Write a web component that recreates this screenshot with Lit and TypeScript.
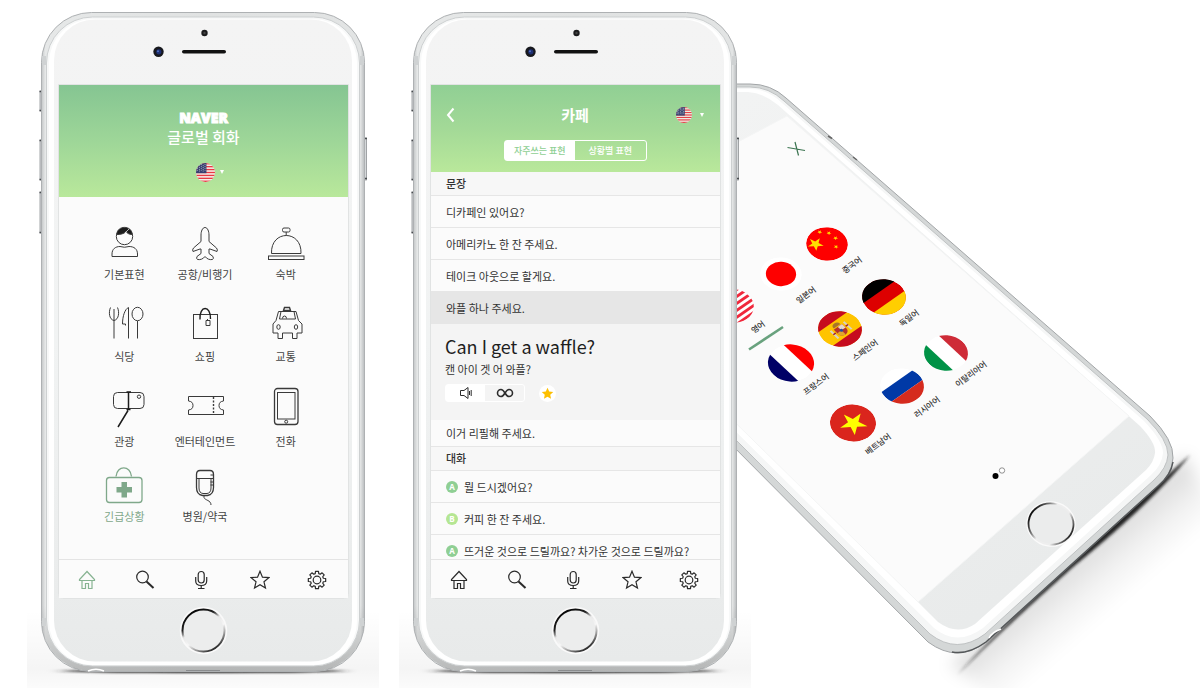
import { LitElement, html, svg, css } from "lit";
import { customElement, property } from "lit/decorators.js";
import { classMap } from "lit/directives/class-map.js";
import { styleMap } from "lit/directives/style-map.js";

const FONT = css`"Noto Sans CJK KR", "Noto Sans", sans-serif`;

const reset = css`
  :host, * { box-sizing: border-box; }
  button { border: 0; margin: 0; padding: 0; background: none; color: inherit; font: inherit; cursor: pointer; }
  h1, h2, p, ul { margin: 0; padding: 0; font: inherit; list-style: none; }
  svg { display: block; }
`;

const star = (cx: number, cy: number, r: number, inner = 0.4) =>
  Array.from({ length: 10 }, (_, i) => {
    const k = i % 2 ? r * inner : r;
    const a = (Math.PI / 5) * i - Math.PI / 2;
    return `${(cx + k * Math.cos(a)).toFixed(2)},${(cy + k * Math.sin(a)).toFixed(2)}`;
  }).join(" ");

const gear = (() => {
  const pts: string[] = [];
  for (let i = 0; i < 8; i++) {
    const base = (Math.PI / 4) * i;
    for (const [d, r] of [[-0.27, 6.6], [-0.17, 8.8], [0.17, 8.8], [0.27, 6.6]]) {
      pts.push(`${(10 + r * Math.cos(base + d)).toFixed(2)},${(10 + r * Math.sin(base + d)).toFixed(2)}`);
    }
  }
  return pts.join(" ");
})();

/* ---------- flags, drawn in a circle of radius 20 round the origin ---------- */

const stripes = Array.from({ length: 7 }, (_, i) =>
  svg`<rect x="-20" y=${-20 + (i * 80) / 13} width="40" height=${40 / 13} fill="#f0283c"/>`);

const cantonStars = [-17, -13, -9, -5, -1].flatMap((x, i) =>
  [-17, -13, -9, -5].map((y) => svg`<circle cx=${x} cy=${y + (i % 2) * 2} r="1" fill="#fff"/>`));

const flags: Record<string, unknown> = {
  us: svg`<rect x="-20" y="-20" width="40" height="40" fill="#fff"/>${stripes}
    <rect x="-20" y="-20" width="22" height="21.5" fill="#2c2f6e"/>${cantonStars}`,
  jp: svg`<circle r="20" fill="#fff"/><circle r="14.5" fill="#fe0000"/>`,
  cn: svg`<circle r="20" fill="#fe0000"/>
    <polygon points=${star(-8.5, -7, 8)} fill="#ffe000"/>
    <polygon points=${star(4, -15, 2.5)} fill="#ffe000"/><polygon points=${star(10, -8.5, 2.5)} fill="#ffe000"/>
    <polygon points=${star(11, 0, 2.5)} fill="#ffe000"/><polygon points=${star(4.5, 8, 2.5)} fill="#ffe000"/>`,
  fr: svg`<circle r="20" fill="#fff"/><rect x="-20" y="-20" width="12" height="40" fill="#000066"/>
    <rect x="8" y="-20" width="12" height="40" fill="#fe0000"/>`,
  es: svg`<circle r="20" fill="#ffc400"/><rect x="-20" y="-20" width="40" height="10" fill="#c60b1e"/>
    <rect x="-20" y="10" width="40" height="10" fill="#c60b1e"/>
    <path d="M-5-3h10v6q0 4-5 5q-5-1-5-5z" fill="#b5322c"/><path d="M0-3h5v5h-5z" fill="#e6d6c8"/>
    <path d="M-5 2h5v6q-5-1-5-5z" fill="#e0a52e"/><circle cx="0" cy="2" r="1.6" fill="#2b4c9b"/>
    <path d="M-4-4q0-4 4-4t4 4z" fill="#a8742a"/>
    <path d="M-8-4v11M8-4v11" stroke="#d8d2c4" stroke-width="2"/><path d="M-9 1h3M6 1h3" stroke="#a5202a" stroke-width="1.5"/>`,
  de: svg`<circle r="20" fill="#dd0000"/><rect x="-20" y="-20" width="40" height="13" fill="#000"/>
    <rect x="-20" y="7" width="40" height="13" fill="#ffce00"/>`,
  vn: svg`<circle r="20" fill="#da251d"/><polygon points=${star(0, 0.5, 12.5, 0.38)} fill="#ffff00"/>`,
  ru: svg`<circle r="20" fill="#fff"/><rect x="-20" y="-7" width="40" height="14" fill="#0039a6"/>
    <rect x="-20" y="7" width="40" height="13" fill="#d52b1e"/>`,
  it: svg`<circle r="20" fill="#fff"/><rect x="-20" y="-20" width="12" height="40" fill="#009246"/>
    <rect x="8" y="-20" width="12" height="40" fill="#ce2b37"/>`,
};

/* ---------- category icons, 44 x 44 ---------- */

const icons: Record<string, unknown> = {
  person: svg`<circle cx="22.5" cy="16.5" r="8.2"/>
    <path d="M14.8 14.5C15 5 30 5 30.2 14.5C27 14.5 25 13 24 11.5C22 14 18 14.5 14.8 14.5z" fill="#1c1c1c"/>
    <path d="M23 13l4-4" stroke="#fff" stroke-width=".7"/>
    <path d="M10 36.5v-2.500C10 29 13.500 26.500 18 26.500q4.500 1.500 9 0C32 26.500 35.500 29 35.500 34v2.500z"/>`,
  plane: svg`<path d="M22 7.500c-2.600 0-4 4-4 7.500v6.500l-7.500 6.500q-1.500 2-.5 3.500l7-2.500h1v4.500l-4 3q-1 2 .5 3c3 .5 5.500-.5 7.500-3c2 2.500 4.500 3.500 7.500 3q1.500-1 .5-3l-4-3V29h1l7 2.500q1-1.500-.5-3.500L26 21.500V15c0-3.500-1.400-7.500-4-7.500z"/>`,
  bell: svg`<rect x="18.500" y="8" width="7.500" height="4" rx="1.500"/><path d="M22.200 12v3.500"/>
    <path d="M7.500 33.500C6.500 9.500 38 9.500 37 33.500z"/><rect x="4.500" y="36" width="35.500" height="3.500"/>`,
  cutlery: svg`<path d="M8.500 5.500C6.500 10 7 17.500 12 18.500C17 17.500 17.500 10 15.500 5.500M12 7v29.500"/>
    <path d="M26.500 36.500V5.500C23 7 20.500 14 20.500 22h3v1.500"/>
    <ellipse cx="35.500" cy="12" rx="5.500" ry="6.700"/><path d="M35.500 19v17.500"/>`,
  bag: svg`<rect x="10.500" y="12.500" width="24" height="24"/>
    <path d="M17 17.500C16 3 28 3 27.500 17" stroke="#1c1c1c" stroke-width="1.400"/><path d="M24.500 17v1M23 18.500h4v5h-4z"/>`,
  taxi: svg`<path d="M19.500 8.500l1-3h5l1 3z" stroke-width="1.400"/><path d="M15.500 17l1.500-7.500h13l1.500 7.500z"/>
    <path d="M14.500 9.500l-2.500 9l-3 3.500v9h5v5.500h4.500v-5.500h10V36.500H33v-5.500h5v-9L34.500 18.500l-2.500-9z"/>
    <path d="M18.500 16.500q0-2.500 2-2.500t2 2.500"/><ellipse cx="14.500" cy="25" rx="1.700" ry="2.300"/><ellipse cx="32" cy="25" rx="1.700" ry="2.300"/>`,
  selfie: svg`<rect x="11.500" y="5.500" width="30.500" height="16" rx="4"/><circle cx="37" cy="9.700" r="1.700"/>
    <path d="M24.500 5h4.500M26.500 5v17.500M24.500 22.500h4M26 23.500L16 40" stroke="#1c1c1c" stroke-width="1.500"/>`,
  ticket: svg`<path d="M5.500 9.500h35v4.500q-4.500.5-4.500 4.500t4.500 4.500v4.500h-35V23q4.500-.5 4.500-4.500T5.500 14z"/>
    <path d="M30.500 10v17" stroke-dasharray="2 1.500" stroke-width="1.400"/>`,
  phone: svg`<rect x="10.500" y="1.500" width="23.500" height="36" rx="3" stroke-width="1.300"/><rect x="13.500" y="5.500" width="17.500" height="26.500"/>
    <circle cx="22.200" cy="34.700" r="1.500"/>`,
  kit: svg`<rect x="4.500" y="15.500" width="35.500" height="25" rx="3"/><path d="M14 14.500C15 3 28.500 3 29.500 14.500"/>
    <path d="M19.500 20h5.500v5h5v5.500h-5v5h-5.500v-5h-5V25h5z" fill="currentColor" stroke="none"/>`,
  drip: svg`<path d="M17 8.500h10q3.500 0 3.500 4v13q0 7-6 8h-5q-6-1-6-8v-13q0-4 3.500-4z" stroke-width="1.300"/>
    <path d="M14 16.500h16M16 17v9q0 5 4 5.500h4q4-.5 4-5.500v-9M27.500 20h3M27.500 23h3M27.500 13h3M21 33.500v2c1 3 7 2.500 7 7.500"/>`,
};

const categories = [
  ["person", "기본표현"], ["plane", "공항/비행기"], ["bell", "숙박"],
  ["cutlery", "식당"], ["bag", "쇼핑"], ["taxi", "교통"],
  ["selfie", "관광"], ["ticket", "엔터테인먼트"], ["phone", "전화"],
  ["kit", "긴급상황"], ["drip", "병원/약국"],
];

const tabs: [string, unknown][] = [
  ["홈", svg`<path d="M9 1.500L1.500 9.500v1h2.500v8h3.500v-5h3v5H14v-8h2.500v-1z M4 10.500h10"/>`],
  ["검색", svg`<circle cx="7.500" cy="7" r="5.800"/><path d="M11.500 11.500l7 6.500" stroke-width="2"/>`],
  ["음성", svg`<rect x="6.200" y="1.500" width="6" height="11.500" rx="3"/><path d="M3.700 7v4q0 4.500 5.500 4.500t5.500-4.500V7M9.200 15.500v3M6 18.500h6.500"/>`],
  ["즐겨찾기", svg`<polygon points=${star(10, 10.5, 9.3, 0.45)}/>`],
  ["설정", svg`<polygon points=${gear} stroke-linejoin="round"/><circle cx="10" cy="10" r="3.800"/>`],
];

/* ---------- round flag ---------- */

@customElement("round-flag")
export class RoundFlag extends LitElement {
  @property() code = "us";
  static styles = css`
    :host { display: block; }
    svg { display: block; width: 100%; height: 100%; border-radius: 50%; }
  `;
  render() {
    return html`<svg viewBox="-20 -20 40 40" aria-hidden="true">${flags[this.code]}</svg>`;
  }
}

/* ---------- bottom tab bar ---------- */

@customElement("tab-bar")
export class TabBar extends LitElement {
  @property({ type: Number }) active = -1;
  static styles = [reset, css`
    :host { display: block; }
    nav { display: grid; grid-template-columns: repeat(5, 1fr); height: 39px; border-top: 1px solid #e4e4e4; padding: 1px 2px 0 0; background: #fbfbfb; }
    button { display: grid; place-items: center; color: #2a2a2a; }
    button.on { color: #86b391; }
    svg { width: 20px; height: 20px; fill: none; stroke: currentColor; stroke-width: 1.2; }
  `];
  render() {
    return html`<nav>${tabs.map(([label, art], i) => html`
      <button aria-label=${label} class=${classMap({ on: i === this.active })}>
        <svg viewBox="0 0 20 20">${art}</svg>
      </button>`)}</nav>`;
  }
}

/* ---------- upright handset ---------- */

@customElement("hand-set")
export class HandSet extends LitElement {
  static styles = [reset, css`
    :host { display: block; flex: none; position: relative; width: 324px; padding: 73px 17px 74px 18px; }
    .shell { position: absolute; left: -14px; top: -12px; width: 352px; height: 688px; }
    .screen { position: relative; display: flex; flex-direction: column; height: 513px; overflow: hidden; background: #fbfbfb; }
  `];
  render() {
    return html`
      <svg class="shell" viewBox="27 0 352 688" aria-hidden="true">
        <defs>
          <linearGradient id="face" x2="0" y2="1"><stop offset="0" stop-color="#f4f4f4"/><stop offset=".5" stop-color="#f1f3f3"/><stop offset="1" stop-color="#e8eaea"/></linearGradient>
          <linearGradient id="rim"><stop offset="0" stop-color="#c3c6c7"/><stop offset=".012" stop-color="#e6e8e8"/><stop offset=".5" stop-color="#e0e2e2"/><stop offset=".988" stop-color="#e2e4e4"/><stop offset="1" stop-color="#b9bcbe"/></linearGradient>
          <linearGradient id="lip" x2="0" y2="1"><stop offset=".9" stop-color="#000" stop-opacity="0"/><stop offset="1" stop-color="#000" stop-opacity=".2"/></linearGradient>
          <linearGradient id="ring" x1=".2" y1="0" x2=".8" y2="1"><stop offset="0" stop-color="#000"/><stop offset=".28" stop-color="#222"/><stop offset=".42" stop-color="#e8e8e8"/><stop offset=".6" stop-color="#f6f6f6"/><stop offset=".8" stop-color="#888"/><stop offset="1" stop-color="#000"/></linearGradient>
          <linearGradient id="floor" x2="0" y2="1"><stop offset="0" stop-color="#000" stop-opacity="0"/><stop offset=".75" stop-color="#000" stop-opacity=".04"/><stop offset="1" stop-color="#000" stop-opacity=".015"/></linearGradient>
          <filter id="soft" x="-20%" y="-300%" width="140%" height="700%"><feGaussianBlur stdDeviation="8 1"/></filter>
        </defs>
        <rect x="27" y="610" width="352" height="78" fill="url(#floor)"/>
        <ellipse cx="203" cy="671" rx="140" ry="2" fill="#222" filter="url(#soft)"/>
        <g fill="#d5d8da" stroke="#8e9294" stroke-width=".8">
          <rect x="40" y="91" width="3" height="20"/><rect x="40" y="140" width="3" height="40"/>
          <rect x="40" y="192" width="3" height="41"/><rect x="363.500" y="138" width="3" height="42"/>
        </g>
        <g stroke="#4a4d50" stroke-width="1.600"><path d="M39.500 91.500h2M39.500 110.500h2M39.500 140.500h2M39.500 179.500h2M39.500 192.500h2M39.500 232.500h2M365 138.500h2M365 178.500h2"/></g>
        <rect x="41.500" y="12.500" width="323" height="659" rx="50" fill="url(#rim)" stroke="#aeb1b3"/>
        <rect x="42" y="13" width="322" height="658" rx="50" fill="url(#lip)"/>
        <path d="M42 56h4v9h-4zM360 56h4v9h-4zM42 618h4v8h-4zM360 618h4v8h-4z" fill="#cfd2d3"/>
        <rect x="46.500" y="17" width="313" height="649" rx="46" fill="#f7f8f8" stroke="#cdd0d1"/>
        <rect x="49" y="19" width="308" height="646" rx="44" fill="#fff"/>
        <rect x="54" y="19.500" width="298" height="642" rx="41" fill="url(#face)"/>
        <path d="M58.500 84.500h290v510q0 4-4 4h-282q-4 0-4-4z" fill="#fbfbfb" stroke="#e1e3e3"/>
        <circle cx="204.500" cy="33" r="3.200" fill="#1b1b1d"/><circle cx="204.500" cy="33" r="1.200" fill="#444"/>
        <circle cx="158.500" cy="51.800" r="5.200" fill="#17181d"/><circle cx="158.800" cy="51.800" r="2.600" fill="#1d2f73"/><circle cx="158" cy="51.200" r="1" fill="#4f6fc2"/>
        <rect x="182" y="50" width="44" height="3.600" rx="1.800" fill="#121212"/>
        <circle cx="203.500" cy="630.500" r="22.500" fill="#eceded" stroke="#f9f9f9" stroke-width="2.500"/>
        <circle cx="203.500" cy="630.500" r="21" fill="none" stroke="url(#ring)" stroke-width="2"/>
        <path d="M88 671q8-3.500 16 0" fill="none" stroke="#fff" stroke-width="1.500"/>
        <path d="M186 670.500h34" stroke="#8a8c8e"/>
      </svg>
      <div class="screen"><slot></slot></div>`;
  }
}

/* ---------- home screen ---------- */

@customElement("home-screen")
export class HomeScreen extends LitElement {
  static styles = [reset, css`
    :host { display: flex; flex-direction: column; height: 100%; font-family: ${FONT}; color: #444; }
    header { display: flex; flex-direction: column; align-items: center; padding: 25px 0 15px; color: #fff;
      background: linear-gradient(#85c592, #9ed698 50%, #b9e89b); }
    .brand { font: 800 14px/16px "Open Sans", sans-serif; -webkit-text-stroke: 1px #fff; }
    h1 { font-size: 15px; font-weight: 500; line-height: 22px; }
    .lang { display: flex; align-items: center; gap: 5px; height: 20px; margin-top: 14px; padding-left: 12px; }
    round-flag { width: 19px; height: 19px; opacity: .9; }
    .caret { border: 2px solid transparent; border-top: 4px solid #fff; border-bottom: 0; }
    main { flex: 1; display: grid; grid-template-columns: repeat(3, 1fr); grid-template-rows: 82px 85px 75px 62px; padding: 23px 22px 0 25px; }
    .item { display: flex; flex-direction: column; align-items: center; gap: 2px; height: 62px; font-size: 11px; line-height: 16px; white-space: nowrap; }
    .item.on { color: #7fa88a; }
    .item svg { width: 44px; height: 44px; fill: none; stroke: #3a3a3a; stroke-width: 1; }
    .item.on svg { stroke: currentColor; stroke-width: 1.3; }
  `];
  render() {
    return html`
      <header>
        <div class="brand">NAVER</div>
        <h1>글로벌 회화</h1>
        <button class="lang" aria-label="언어 선택"><round-flag code="us"></round-flag><span class="caret"></span></button>
      </header>
      <main>${categories.map(([icon, label]) => html`
        <button class=${classMap({ item: true, on: icon === "kit" })}>
          <svg viewBox="0 0 44 44" aria-hidden="true">${icons[icon]}</svg><span>${label}</span>
        </button>`)}
      </main>
      <tab-bar .active=${0}></tab-bar>`;
  }
}

/* ---------- phrase screen ---------- */

@customElement("phrase-screen")
export class PhraseScreen extends LitElement {
  static styles = [reset, css`
    :host { display: flex; flex-direction: column; height: 100%; font-family: ${FONT}; font-size: 11px; line-height: 16px; color: #333; }
    header { padding: 19px 16px 11px 15px; color: #fff; background: linear-gradient(#90cf94, #a3d997 50%, #b9e89b); }
    .bar { display: grid; grid-template-columns: 1fr auto 1fr; align-items: center; height: 22px; }
    .back { justify-self: start; }
    .back svg { width: 10px; height: 16px; fill: none; stroke: #fff; stroke-width: 2; }
    h1 { font-size: 15px; font-weight: 700; line-height: 22px; }
    .lang { display: flex; align-items: center; gap: 8px; justify-self: end; }
    round-flag { width: 16px; height: 16px; opacity: .85; }
    .caret { border: 2px solid transparent; border-top: 4px solid #fff; border-bottom: 0; }
    .seg { display: grid; grid-template-columns: 1fr 1fr; width: 143px; height: 21px; margin: 14px auto 0; border: 1px solid #fff; border-radius: 3px; font-size: 9px; font-weight: 500; }
    .seg .on { background: #fff; color: #8fcf94; }
    main { flex: 1; min-height: 0; overflow: hidden; }
    h2 { height: 24px; padding: 3px 15px; border-bottom: 1px solid #e6e6e6; background: #f7f7f7; font-weight: 500; }
    .row { display: flex; align-items: center; gap: 6px; width: 100%; height: 32px; padding: 0 15px; border-bottom: 1px solid #e6e6e6; white-space: nowrap; text-align: left; }
    .row.sel { background: #e6e6e6; }
    .row.short { height: 27px; }
    .detail { padding: 9px 14px 18px; background: #f4f4f4; }
    .phrase { font-size: 18px; line-height: 26px; color: #1e1e1e; }
    .say { padding: 2px 0 7px; }
    .tools { display: flex; align-items: center; gap: 14px; }
    .play { display: grid; grid-template-columns: 1fr 1fr; width: 80px; height: 18px; border: 1px solid #fff; border-radius: 3px; }
    .play button { display: grid; place-items: center; }
    .play .on { background: #fff; }
    .play svg { width: 18px; height: 14px; fill: none; stroke: #2c2c2c; }
    .fav { width: 17px; height: 17px; border-radius: 50%; background: #fff; }
    .fav svg { width: 17px; height: 17px; fill: #fdbf00; }
    .who { display: grid; place-items: center; flex: none; width: 12px; height: 12px; border-radius: 50%; background: #8fcf94; color: #fff; font: 700 8px/12px "Open Sans", sans-serif; }
    .who.b { background: #b5e693; }
  `];
  render() {
    const talk = [["A", "뭘 드시겠어요?"], ["B", "커피 한 잔 주세요."], ["A", "뜨거운 것으로 드릴까요? 차가운 것으로 드릴까요?"]];
    const rows = ["디카페인 있어요?", "아메리카노 한 잔 주세요.", "테이크 아웃으로 할게요.", "와플 하나 주세요."];
    return html`
      <header>
        <div class="bar">
          <button class="back" aria-label="뒤로"><svg viewBox="0 0 10 16"><path d="M7.500 1.500L2 8l5.500 6.500"/></svg></button>
          <h1>카페</h1>
          <button class="lang" aria-label="언어 선택"><round-flag code="us"></round-flag><span class="caret"></span></button>
        </div>
        <div class="seg"><button class="on">자주쓰는 표현</button><button>상황별 표현</button></div>
      </header>
      <main>
        <h2>문장</h2>
        <ul>${rows.map((t, i) => html`<li><button class=${classMap({ row: true, sel: i === 3 })}>${t}</button></li>`)}</ul>
        <section class="detail">
          <p class="phrase">Can I get a waffle?</p>
          <p class="say">캔 아이 겟 어 와플?</p>
          <div class="tools">
            <div class="play">
              <button class="on" aria-label="듣기"><svg viewBox="0 0 18 14"><path d="M3.500 4.500h3.500l4-3v11l-4-3H3.500zM12.500 5v4M14.200 4v6"/></svg></button>
              <button aria-label="반복"><svg viewBox="0 0 18 14" stroke-width="1.600"><path d="M9 7C7.500 4.500 6.500 3.500 5 3.500a3.500 3.500 0 0 0 0 7C6.500 10.500 7.500 9.500 9 7S11.500 3.500 13 3.500a3.500 3.500 0 0 1 0 7C11.500 10.500 10.500 9.500 9 7z"/></svg></button>
            </div>
            <button class="fav" aria-label="즐겨찾기"><svg viewBox="0 0 17 17"><polygon points=${star(8.5, 8.8, 6, 0.48)}/></svg></button>
          </div>
        </section>
        <button class="row short">이거 리필해 주세요.</button>
        <h2>대화</h2>
        <ul>${talk.map(([w, t]) => html`<li><button class="row"><span class=${classMap({ who: true, b: w === "B" })}>${w}</span>${t}</button></li>`)}</ul>
      </main>
      <tab-bar></tab-bar>`;
  }
}

/* ---------- tilted handset with the language picker ---------- */

interface Lang { code: string; name: string; x: number; y: number; r: number; }

const languages: Lang[] = [
  { code: "us", name: "영어", x: 733, y: 306, r: 19 },
  { code: "jp", name: "일본어", x: 781, y: 274, r: 19 },
  { code: "cn", name: "중국어", x: 827, y: 244, r: 19 },
  { code: "fr", name: "프랑스어", x: 791, y: 363, r: 21 },
  { code: "es", name: "스페인어", x: 840, y: 329, r: 20 },
  { code: "de", name: "독일어", x: 884, y: 297, r: 20 },
  { code: "vn", name: "베트남어", x: 853, y: 423, r: 21 },
  { code: "ru", name: "러시아어", x: 902, y: 386, r: 20 },
  { code: "it", name: "이탈리아어", x: 946, y: 353, r: 20 },
];

@customElement("tilted-handset")
export class TiltedHandset extends LitElement {
  static styles = [reset, css`
    :host { display: block; width: 1200px; height: 688px; font-family: ${FONT}; color: #333; }
    .art { position: absolute; left: 0; top: 0; width: 1200px; height: 688px; }
    .lang { position: absolute; width: 48px; height: 40px; margin: -20px 0 0 -24px; }
    .lang svg { width: 48px; height: 40px; overflow: visible; }
    .name { position: absolute; left: 49px; top: 41px; width: 60px; margin: -6px 0 0 -30px; text-align: center;
      font-size: 8px; font-weight: 500; line-height: 12px; white-space: nowrap; transform: rotate(-37deg); }
    .close { position: absolute; left: 786px; top: 139px; }
    .close svg { width: 20px; height: 20px; stroke: #3b7450; stroke-width: 1.2; }
  `];
  render() {
    return html`
      <svg class="art" viewBox="0 0 1200 688" aria-hidden="true">
        <defs>
          <linearGradient id="b" gradientUnits="userSpaceOnUse" x1="740" y1="100" x2="1060" y2="560"><stop offset="0" stop-color="#f2f3f3"/><stop offset="1" stop-color="#e9ebeb"/></linearGradient>
          <linearGradient id="h" x1="0" y1=".3" x2="1" y2=".7"><stop offset="0" stop-color="#000"/><stop offset=".25" stop-color="#777"/><stop offset=".4" stop-color="#eee"/><stop offset=".7" stop-color="#eee"/><stop offset="1" stop-color="#111"/></linearGradient>
          <linearGradient id="s" gradientUnits="userSpaceOnUse" x1="1060" y1="570" x2="1110" y2="628"><stop offset="0" stop-color="#000" stop-opacity=".14"/><stop offset=".5" stop-color="#000" stop-opacity=".04"/><stop offset="1" stop-color="#000" stop-opacity="0"/></linearGradient>
          <filter id="f1" x="-20%" y="-20%" width="140%" height="140%"><feGaussianBlur stdDeviation="1.500"/></filter>
          <filter id="f2" x="-20%" y="-20%" width="140%" height="140%"><feGaussianBlur stdDeviation="8"/></filter>
        </defs>
        <path d="M950 665L1185 455L1215 510L1000 700z" fill="url(#s)" filter="url(#f2)"/>
        <path d="M958 674Q1000 628 1070 564Q1145 495 1190 455Q1155 500 1073 567Q1000 632 958 674z" fill="#222" filter="url(#f1)"/>
        <path d="M700 84H750Q771 84 786 98L1150 416Q1174 440 1173 458Q1172 474 1158 486L986 642Q958 664 928 642L700 413z" fill="#d4d7d7" stroke="#a3a6a8"/>
        <path d="M1173 462Q1171 475 1158 486L986 642Q968 655 952 652" fill="none" stroke="#55585a" stroke-width="1.500"/>
        <path d="M700 87H750Q769 87 784 101L1147 419Q1168 440 1168 455Q1167 468 1154 480L985 634Q957 655 930 634L700 404z" fill="#f5f6f6" stroke="#bfc2c3"/>
        <path d="M700 89H750Q768 89 782 103L1144 421Q1163 441 1163 453Q1162 465 1151 475L983 628Q957 647 934 628L700 396z" fill="#fff"/>
        <path d="M700 92H748Q764 93 778 105L1140 426Q1156 443 1155 453Q1154 462 1146 470L975 624Q957 636 938 622L700 385z" fill="url(#b)"/>
        <path d="M700 162L787 116L1129 416L918 602L700 388z" fill="#fbfbfb" stroke="#f4f5f5"/>
        <path d="M828 136l4 2.500M853 157l4 3" stroke="#666" stroke-width="1.500"/>
        <path d="M989 638q3-6 12-9" stroke="#fff" stroke-width="1.500" fill="none"/>
        <g transform="rotate(8 1051 524)"><ellipse cx="1051" cy="524" rx="23.500" ry="21.500" fill="#ebecec" stroke="#fafafa" stroke-width="2.500"/>
          <ellipse cx="1051" cy="524" rx="22.500" ry="20.500" fill="none" stroke="url(#h)" stroke-width="1.800"/></g>
        <path d="M749 349.500L783 327" stroke="#69a27e" stroke-width="2.600"/>
        <circle cx="995.500" cy="476" r="3" fill="#000"/><circle cx="1002" cy="470.500" r="2.700" fill="#fff" stroke="#777" stroke-width=".8"/>
      </svg>
      <button class="close" aria-label="닫기"><svg viewBox="0 0 20 20"><path d="M1.500 8.500L19 11.500M9 3l3.500 13.500"/></svg></button>
      ${languages.map((l) => html`
        <button class="lang" style=${styleMap({ left: `${l.x}px`, top: `${l.y}px` })}>
          <svg viewBox="-24 -20 48 40" aria-hidden="true">
            <clipPath id=${"clip-" + l.code}><circle r="20"/></clipPath>
            <g transform=${`matrix(.82 -.57 .73 .68 0 0) scale(${l.r / 20})`}><g clip-path=${`url(#clip-${l.code})`}>${flags[l.code]}</g></g>
          </svg>
          <span class="name">${l.name}</span>
        </button>`)}`;
  }
}

@customElement("app-root")
export class AppRoot extends LitElement {
  static styles = css`
    :host { display: block; position: relative; min-height: 100vh; overflow: hidden; background: #fff; }
    .stage { position: relative; display: flex; align-items: flex-start; gap: 48px; padding: 12px 41px 16px; pointer-events: none; }
    .stage > * { pointer-events: auto; }
    .behind { position: absolute; left: 0; top: 0; }
  `;
  render() {
    return html`
      <tilted-handset class="behind"></tilted-handset>
      <div class="stage">
        <hand-set><home-screen></home-screen></hand-set>
        <hand-set><phrase-screen></phrase-screen></hand-set>
      </div>`;
  }
}
